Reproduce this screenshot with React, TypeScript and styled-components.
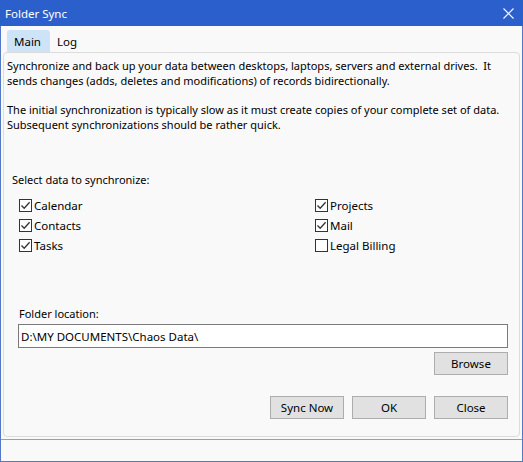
import React from "react";
import styled, { createGlobalStyle } from "styled-components";

const Global = createGlobalStyle`
  html, body { margin: 0; padding: 0; background: #f9f9f9; }
  * { box-sizing: border-box; }
`;

const FONT = `"Noto Sans", "Segoe UI", "Open Sans", sans-serif`;

const Window = styled.div`
  width: 523px;
  height: 462px;
  display: flex;
  flex-direction: column;
  background: #f9f9f9;
  border: 1px solid #5478c6;
  border-top: none;
  font-family: ${FONT};
  font-size: 11px;
  color: #000;
`;

const TitleBar = styled.div`
  height: 26px;
  margin: 0 -1px;
  background: #2b5fcb;
  color: #fff;
  display: flex;
  align-items: center;
  justify-content: space-between;
  padding: 0 9px 0 5px;
  font-size: 11.5px;
  flex-shrink: 0;
`;

const CloseIcon = styled.svg`
  width: 11px;
  height: 11px;
`;

const Body = styled.div`
  flex: 1;
  display: flex;
  flex-direction: column;
  padding: 4px 2px 0 2px;
`;

const TabStrip = styled.div`
  display: flex;
  height: 22px;
  padding-left: 4px;
`;

const Tab = styled.div<{ $active?: boolean }>`
  display: flex;
  align-items: center;
  padding: 0 9px 0 7px;
  background: ${(p) => (p.$active ? "#cde4f8" : "transparent")};
  border-radius: 3px 3px 0 0;
  font-size: 11.5px;
`;

const Panel = styled.div`
  height: 385px;
  border: 1px solid #dcdcdc;
  border-radius: 4px;
  display: flex;
  flex-direction: column;
  padding: 5px 11px 0 3px;
`;

const Para = styled.p`
  margin: 0 0 14px 0;
  line-height: 15px;
  white-space: nowrap;
`;

const SectionLabel = styled.div`
  margin: 26px 0 0 5px;
  line-height: 15px;
`;

const CheckGrid = styled.div`
  display: grid;
  grid-template-columns: 296px 1fr;
  grid-auto-rows: 20px;
  margin: 8px 0 0 12px;
`;

const CheckItem = styled.label`
  display: flex;
  align-items: center;
  gap: 2px;
  font-size: 11.5px;
`;

const Box = styled.span`
  width: 13px;
  height: 13px;
  border: 1px solid #333;
  background: #fff;
  display: flex;
  align-items: center;
  justify-content: center;
`;

const FieldLabel = styled.div`
  margin: 51px 0 0 12px;
  line-height: 15px;
`;

const PathInput = styled.div`
  margin: 3px 0 0 11px;
  height: 24px;
  border: 1px solid #7a7a7a;
  background: #fff;
  display: flex;
  align-items: center;
  padding-left: 2px;
  font-size: 11.5px;
`;

const ButtonRow = styled.div<{ $top: number }>`
  display: flex;
  justify-content: flex-end;
  gap: 8px;
  margin-top: ${(p) => p.$top}px;
`;

const Button = styled.div`
  width: 74px;
  height: 23px;
  background: #e1e1e1;
  border: 1px solid #adadad;
  display: flex;
  align-items: center;
  justify-content: center;
  font-size: 11.5px;
`;

const StatusBar = styled.div`
  flex: 1;
  margin: 2px -2px 0;
  border-top: 1px solid #a0a0a0;
`;

const Check = ({ checked }: { checked: boolean }) => (
  <Box>
    {checked && (
      <svg width="11" height="11" viewBox="0 0 11 11">
        <path d="M1.5 5.5 L4.2 8.3 L9.6 2.2" fill="none" stroke="#333" strokeWidth="1.3" />
      </svg>
    )}
  </Box>
);

const items: [string, boolean][] = [
  ["Calendar", true],
  ["Projects", true],
  ["Contacts", true],
  ["Mail", true],
  ["Tasks", true],
  ["Legal Billing", false],
];

export default function App() {
  return (
    <>
      <Global />
      <Window>
        <TitleBar>
          <span>Folder Sync</span>
          <CloseIcon viewBox="0 0 11 11">
            <path d="M0.5 0.5 L10.5 10.5 M10.5 0.5 L0.5 10.5" stroke="#fff" strokeWidth="1.1" />
          </CloseIcon>
        </TitleBar>
        <Body>
          <TabStrip>
            <Tab $active>Main</Tab>
            <Tab>Log</Tab>
          </TabStrip>
          <Panel>
            <Para>
              Synchronize and back up your data between desktops, laptops, servers and external drives.&nbsp; It
              <br />
              sends changes (adds, deletes and modifications) of records bidirectionally.
            </Para>
            <Para>
              The initial synchronization is typically slow as it must create copies of your complete set of data.
              <br />
              Subsequent synchronizations should be rather quick.
            </Para>
            <SectionLabel>Select data to synchronize:</SectionLabel>
            <CheckGrid>
              {items.map(([label, checked]) => (
                <CheckItem key={label}>
                  <Check checked={checked} />
                  {label}
                </CheckItem>
              ))}
            </CheckGrid>
            <FieldLabel>Folder location:</FieldLabel>
            <PathInput>D:\MY DOCUMENTS\Chaos Data\</PathInput>
            <ButtonRow $top={4}>
              <Button>Browse</Button>
            </ButtonRow>
            <ButtonRow $top={21}>
              <Button>Sync Now</Button>
              <Button>OK</Button>
              <Button>Close</Button>
            </ButtonRow>
          </Panel>
          <StatusBar />
        </Body>
      </Window>
    </>
  );
}
